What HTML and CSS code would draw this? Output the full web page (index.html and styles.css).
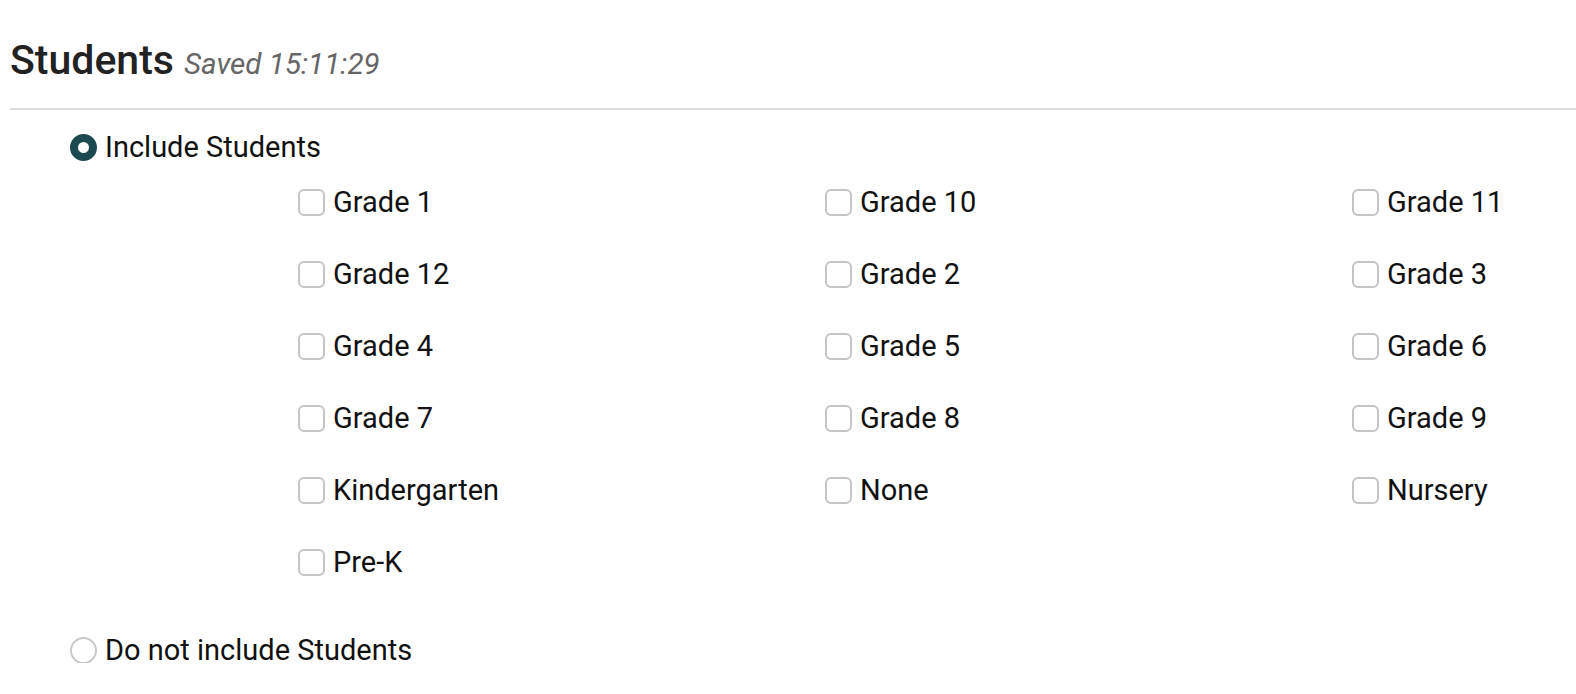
FILE: index.html
```html
<!DOCTYPE html>
<html>
<head>
<meta charset="utf-8">
<link rel="stylesheet" href="styles.css">
</head>
<body>
<div class="page">
  <header class="header">
    <h1 class="title">Students</h1>
    <span class="saved">Saved 15:11:29</span>
  </header>
  <div class="options">
    <label class="radio-row">
      <span class="radio radio-on"></span>
      <span class="label">Include Students</span>
    </label>
    <div class="grades">
      <label class="check"><span class="box"></span><span class="label">Grade 1</span></label>
      <label class="check"><span class="box"></span><span class="label">Grade 10</span></label>
      <label class="check"><span class="box"></span><span class="label">Grade 11</span></label>
      <label class="check"><span class="box"></span><span class="label">Grade 12</span></label>
      <label class="check"><span class="box"></span><span class="label">Grade 2</span></label>
      <label class="check"><span class="box"></span><span class="label">Grade 3</span></label>
      <label class="check"><span class="box"></span><span class="label">Grade 4</span></label>
      <label class="check"><span class="box"></span><span class="label">Grade 5</span></label>
      <label class="check"><span class="box"></span><span class="label">Grade 6</span></label>
      <label class="check"><span class="box"></span><span class="label">Grade 7</span></label>
      <label class="check"><span class="box"></span><span class="label">Grade 8</span></label>
      <label class="check"><span class="box"></span><span class="label">Grade 9</span></label>
      <label class="check"><span class="box"></span><span class="label">Kindergarten</span></label>
      <label class="check"><span class="box"></span><span class="label">None</span></label>
      <label class="check"><span class="box"></span><span class="label">Nursery</span></label>
      <label class="check"><span class="box"></span><span class="label">Pre-K</span></label>
    </div>
    <label class="radio-row radio-last">
      <span class="radio"></span>
      <span class="label">Do not include Students</span>
    </label>
  </div>
</div>
</body>
</html>
```

FILE: styles.css
```css
html, body {
  margin: 0;
  padding: 0;
  background: #fff;
  overflow: hidden;
}
body {
  font-family: Roboto, "Liberation Sans", sans-serif;
  color: #111;
}
.page {
  padding-left: 10px;
}
.header {
  display: flex;
  align-items: baseline;
  gap: 10px;
  padding-top: 36px;
  box-sizing: border-box;
  border-bottom: 2px solid #dcdcdc;
  height: 110px;
}
.title {
  margin: 0;
  font-size: 41px;
  line-height: 48px;
  font-weight: 500;
  color: #222;
}
.saved {
  font-size: 29.6px;
  font-style: italic;
  color: #666;
}
.options {
  padding-left: 60px;
  padding-top: 24px;
}
.radio-row {
  display: flex;
  align-items: center;
  gap: 8px;
  height: 26px;
  font-size: 29px;
}
.radio {
  width: 27px;
  height: 27px;
  box-sizing: border-box;
  border-radius: 50%;
  border: 2px solid #c8c8c8;
  flex: none;
}
.radio-on {
  border: 8px solid #1c4a50;
  background: #fff;
}
.grades {
  display: grid;
  grid-template-columns: repeat(3, 527px);
  grid-auto-rows: 72px;
  margin-left: 228px;
  margin-top: 6px;
}
.check {
  display: flex;
  align-items: center;
  gap: 8px;
  font-size: 29px;
}
.box {
  width: 27px;
  height: 27px;
  box-sizing: border-box;
  border: 2px solid #c4c4c4;
  border-radius: 6px;
  flex: none;
}
.label {
  line-height: 32px;
}
.radio-last {
  margin-top: 39px;
}
```
